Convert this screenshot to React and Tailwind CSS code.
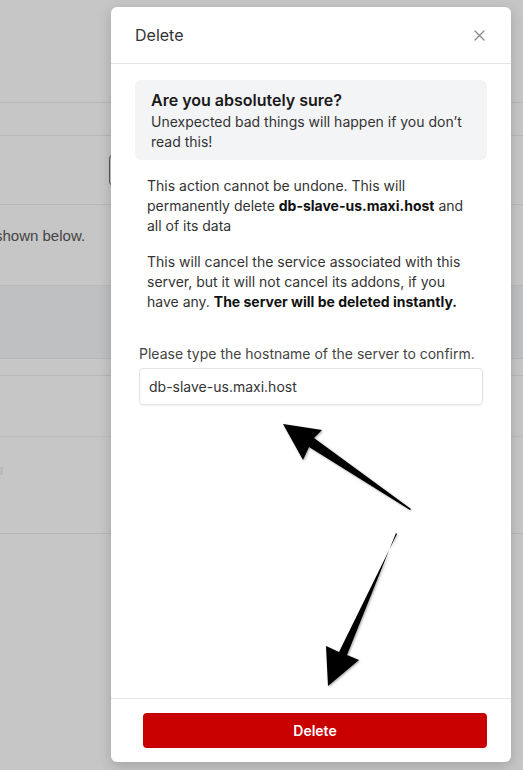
const Arrows = () => (
	<svg className="absolute left-0 top-0 pointer-events-none" width="523" height="770" viewBox="0 0 523 770">
		<defs>
			<filter id="arrowShadow" x="-20%" y="-20%" width="140%" height="140%">
				<feDropShadow dx="1" dy="1" stdDeviation="1.2" floodColor="#000" floodOpacity="0.35" />
			</filter>
		</defs>
		<g fill="#000" filter="url(#arrowShadow)">
			{/* upper arrow */}
			<polygon points="411,509 314,438 322,430 283,424 303,460 309,447 410,510" />
			{/* lower arrow */}
			<polygon points="396,533 347,655 359,660 328,686 326,646 339,652 397,534" />
		</g>
	</svg>
);

const Background = () => (
	<div className="h-[770px] w-full bg-[#c6c6c6] flex flex-col">
		<div className="h-[103px] border-b border-[#b6b6b6]" />
		<div className="h-[33px] border-b border-[#b6b6b6]" />
		<div className="h-[69px] border-b border-[#b8b8b8] flex items-center">
			<div className="ml-[109px] w-[12px] h-[34px] rounded-l-md border border-[#555]" />
		</div>
		<div className="h-[81px] border-b border-[#b9b9b9] pt-[21px]">
			<p className="ml-[-5px] text-[15px] leading-5 text-[#444]" style={{ fontFamily: "'Liberation Sans', Arial, sans-serif" }}>
				shown below.
			</p>
		</div>
		<div className="h-[73px] bg-[#bfc0c2] border-b border-[#b7b7b7]" />
		<div className="h-[17px] border-b border-[#b6b6b6]" />
		<div className="h-[61px] border-b border-[#bdbdbd]" />
		<div className="h-[97px] border-b border-[#b6b6b6] pt-[30px]">
			<div className="ml-0 w-[3px] h-[8px] bg-[#bababa]" />
		</div>
		<div className="flex-1" />
	</div>
);

export default function App() {
	return (
		<div className="relative h-[770px] w-[523px] overflow-hidden" style={{ fontFamily: "Inter, 'Liberation Sans', sans-serif" }}>
			<Background />

			{/* Modal */}
			<div className="absolute left-[111px] top-[7px] w-[400px] h-[755px] bg-white rounded-md shadow-[0_4px_14px_rgba(0,0,0,0.18)] flex flex-col">
				<div className="h-[57px] shrink-0 border-b border-[#e6e6e6] flex items-center justify-between pl-6 pr-[26px]">
					<h2 className="text-base text-[#333]">Delete</h2>
					<svg width="11" height="11" viewBox="0 0 11 11" stroke="#8a8a8a" strokeWidth="1.3" strokeLinecap="round">
						<path d="M1 1l9 9M10 1l-9 9" />
					</svg>
				</div>

				<div className="flex-1 px-6 pt-4">
					<div className="bg-[#f3f4f6] rounded-md px-4 py-2">
						<p className="text-base leading-6 font-semibold text-[#1a1a1a]">Are you absolutely sure?</p>
						<p className="text-sm leading-5 text-[#333]">Unexpected bad things will happen if you don’t read this!</p>
					</div>

					<div className="mt-4 px-3 space-y-4 text-sm leading-5 text-[#333]">
						<p>
							This action cannot be undone. This will permanently delete{" "}
							<span className="font-bold text-[#111]">db-slave-us.maxi.host</span> and all of its data
						</p>
						<p>
							This will cancel the service associated with this server, but it will not cancel its addons, if you have
							any. <span className="font-bold text-[#111]">The server will be deleted instantly.</span>
						</p>
					</div>

					<div className="mt-8 px-1">
						<label className="block text-sm leading-5 text-[#444]">Please type the hostname of the server to confirm.</label>
						<input
							readOnly
							value="db-slave-us.maxi.host"
							className="mt-1 w-full h-[37px] px-[9px] text-sm text-[#333] border border-[#e3e3e3] rounded shadow-[0_1px_2px_rgba(0,0,0,0.05)] outline-none"
						/>
					</div>
				</div>

				<div className="h-[64px] shrink-0 border-t border-[#e6e6e6] pl-8 pr-6 pt-[14px]">
					<button className="w-full h-[35px] rounded bg-[#c80000] text-white text-sm font-semibold">Delete</button>
				</div>
			</div>

			<Arrows />
		</div>
	);
}
